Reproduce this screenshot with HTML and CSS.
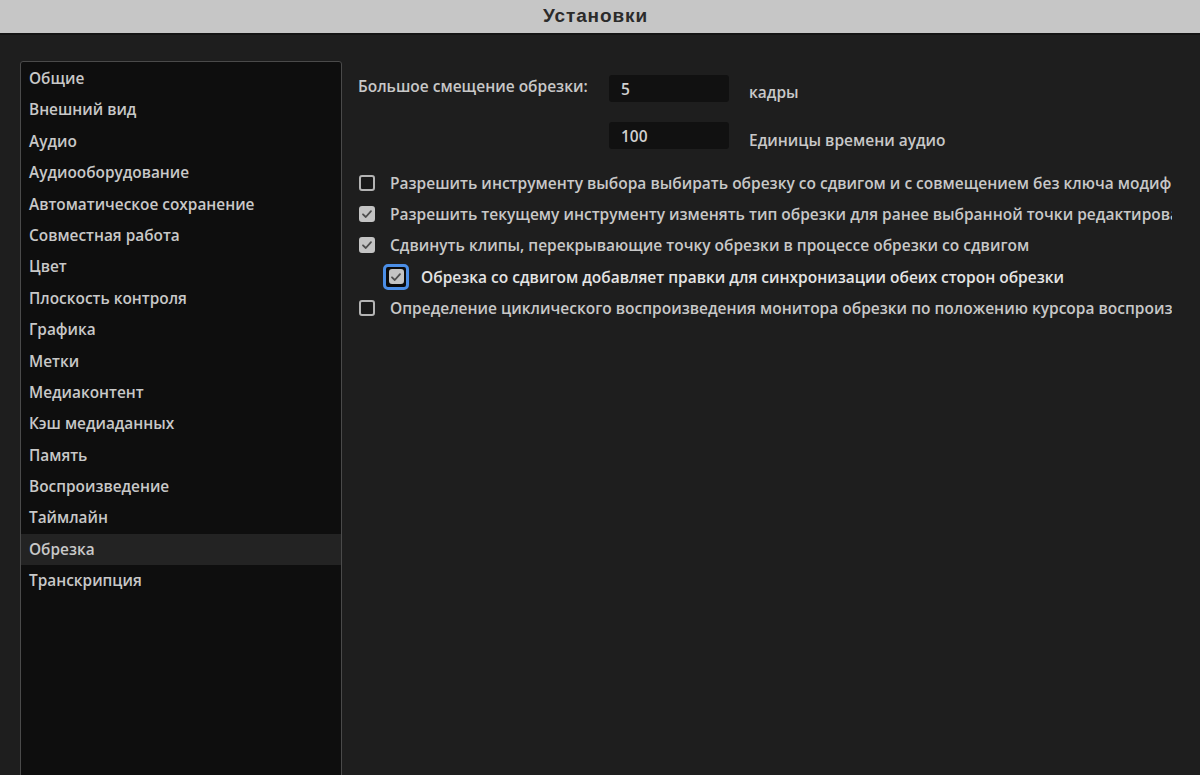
FILE: index.html
```html
<!DOCTYPE html>
<html lang="ru">
<head>
<meta charset="utf-8">
<title>Установки</title>
<link rel="stylesheet" href="styles.css">
</head>
<body>
<div class="titlebar">Установки</div>
<div class="main">
  <ul class="sidebar">
    <li class="item">Общие</li>
    <li class="item">Внешний вид</li>
    <li class="item">Аудио</li>
    <li class="item">Аудиооборудование</li>
    <li class="item">Автоматическое сохранение</li>
    <li class="item">Совместная работа</li>
    <li class="item">Цвет</li>
    <li class="item">Плоскость контроля</li>
    <li class="item">Графика</li>
    <li class="item">Метки</li>
    <li class="item">Медиаконтент</li>
    <li class="item">Кэш медиаданных</li>
    <li class="item">Память</li>
    <li class="item">Воспроизведение</li>
    <li class="item">Таймлайн</li>
    <li class="item selected">Обрезка</li>
    <li class="item">Транскрипция</li>
  </ul>
  <div class="panel">
    <div class="field-row">
      <span class="label">Большое смещение обрезки:</span>
      <span class="input">5</span>
      <span class="unit">кадры</span>
    </div>
    <div class="field-row second">
      <span class="label"></span>
      <span class="input">100</span>
      <span class="unit">Единицы времени аудио</span>
    </div>
    <div class="checks">
      <div class="check-row"><span class="box"></span><span class="text">Разрешить инструменту выбора выбирать обрезку со сдвигом и с совмещением без ключа модификатора</span></div>
      <div class="check-row"><span class="box checked"><svg viewBox="0 0 16 16"><path d="M4 8.3 L6.8 11 L12 5.2" /></svg></span><span class="text">Разрешить текущему инструменту изменять тип обрезки для ранее выбранной точки редактирования</span></div>
      <div class="check-row"><span class="box checked"><svg viewBox="0 0 16 16"><path d="M4 8.3 L6.8 11 L12 5.2" /></svg></span><span class="text">Сдвинуть клипы, перекрывающие точку обрезки в процессе обрезки со сдвигом</span></div>
      <div class="check-row indent"><span class="focus"><span class="box checked"><svg viewBox="0 0 16 16"><path d="M4 8.3 L6.8 11 L12 5.2" /></svg></span></span><span class="text bright">Обрезка со сдвигом добавляет правки для синхронизации обеих сторон обрезки</span></div>
      <div class="check-row"><span class="box"></span><span class="text">Определение циклического воспроизведения монитора обрезки по положению курсора воспроизведения</span></div>
    </div>
  </div>
</div>
</body>
</html>
```
FILE: styles.css
```css
html, body {
  margin: 0;
  padding: 0;
  height: 100%;
  overflow: hidden;
}
body {
  background: #1e1e1e;
  font-family: "Open Sans", "Noto Sans", sans-serif;
  color: #c8c8c8;
}
.titlebar {
  height: 33px;
  line-height: 31px;
  background: #c6c6c6;
  border-bottom: 2px solid #141414;
  text-align: center;
  padding-right: 9px;
  font-family: "Liberation Sans", Arial, sans-serif;
  font-weight: bold;
  font-size: 19px;
  color: #2b2b2b;
  letter-spacing: 0.9px;
}
.main {
  display: flex;
  padding: 26px 0 0 20px;
  gap: 16px;
  height: 740px;
  box-sizing: border-box;
}
.sidebar {
  list-style: none;
  margin: 0;
  padding: 1px 0 0 0;
  width: 320px;
  flex: none;
  height: 760px;
  background: #0e0e0e;
  border: 1px solid #4a4a4a;
  border-radius: 3px;
}
.item {
  height: 31.4px;
  line-height: 31.4px;
  padding-left: 8px;
  font-size: 15.4px;
  font-weight: 600;
  white-space: nowrap;
}
.item.selected {
  background: #232323;
}
.panel {
  width: 814px;
  overflow: hidden;
  white-space: nowrap;
  padding-top: 14px;
}
.field-row {
  display: flex;
  align-items: center;
  height: 27px;
  font-size: 15.5px;
  font-weight: 600;
}
.field-row .label {
  width: 251px;
  flex: none;
  align-self: flex-start;
  margin-top: 0px;
}
.field-row.second {
  margin-top: 20px;
}
.input {
  width: 108px;
  height: 27px;
  line-height: 28px;
  padding-left: 12px;
  background: #111111;
  border-radius: 3px;
  flex: none;
  color: #d0d0d0;
}
.unit {
  margin-left: 20px;
  margin-top: 6px;
}
.field-row.second .unit {
  margin-top: 8px;
}
.checks {
  margin-top: 18px;
}
.check-row {
  display: flex;
  align-items: center;
  height: 31.3px;
  font-size: 15.5px;
  font-weight: 600;
}
.box {
  width: 16px;
  height: 16px;
  box-sizing: border-box;
  border: 2px solid #b4b4b4;
  background: #1a1a1a;
  border-radius: 3px;
  flex: none;
  margin-left: 1px;
  display: flex;
  align-items: center;
  justify-content: center;
}
.box.checked {
  background: #c4c4c4;
  border-color: #c4c4c4;
}
.box svg {
  width: 16px;
  height: 16px;
  flex: none;
}
.box svg path {
  fill: none;
  stroke: #4e4e4e;
  stroke-width: 1.8;
  stroke-linecap: round;
  stroke-linejoin: round;
}
.text {
  margin-left: 15px;
}
.text.bright {
  color: #e4e4e4;
  margin-left: 12px;
}
.indent {
  padding-left: 25px;
}
.focus {
  width: 26px;
  height: 26px;
  box-sizing: border-box;
  border: 3px solid #4b8ee6;
  border-radius: 5px;
  background: #0a0a0a;
  display: flex;
  align-items: center;
  justify-content: center;
  flex: none;
}
.focus .box {
  margin-left: 0;
  width: 15px;
  height: 15px;
}
```
